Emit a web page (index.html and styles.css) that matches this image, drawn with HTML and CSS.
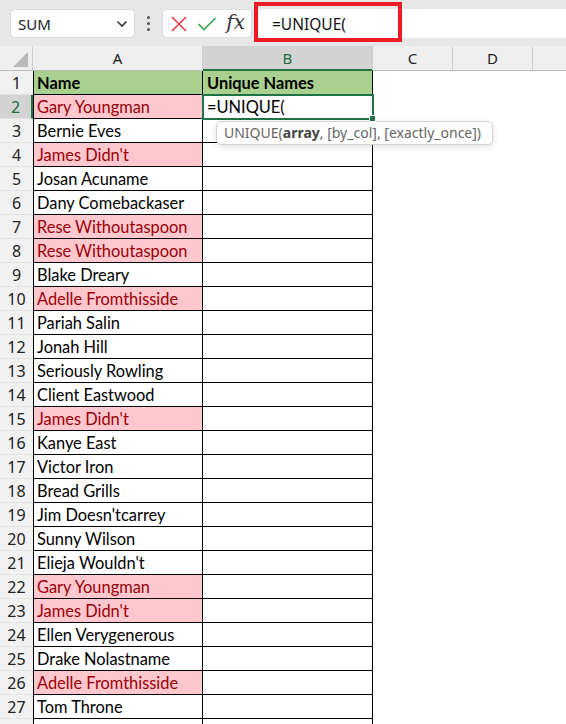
FILE: index.html
```html
<!DOCTYPE html>
<html lang="en">
<head>
  <meta charset="UTF-8" />
  <title>UNIQUE</title>
  <link rel="stylesheet" href="styles.css">
</head>
<body>
  <!-- formula bar -->
  <div class="bar">
    <div class="namebox">
      <span>SUM</span>
      <svg class="chev" width="12" height="8" viewBox="0 0 12 8"><path d="M1.5 1.5 L6 6 L10.5 1.5" fill="none" stroke="#333" stroke-width="1.6"/></svg>
    </div>
    <div class="dots"><i></i><i></i><i></i></div>
    <div class="btns">
      <svg width="18" height="18" viewBox="0 0 18 18"><path d="M2 2 L16 16 M16 2 L2 16" stroke="#e8414a" stroke-width="1.7" fill="none"/></svg>
      <svg width="20" height="16" viewBox="0 0 20 16"><path d="M1.5 8 L7 13.5 L18.5 2" stroke="#3aa757" stroke-width="1.7" fill="none"/></svg>
      <span class="fx">fx</span>
    </div>
    <div class="formula">
      <span class="ftext">=UNIQUE(</span>
      <div class="mark"></div>
    </div>
  </div>

  <!-- sheet -->
  <div class="sheet">
    <div class="ch corner"><span class="tri"></span></div>
    <div class="ch">A</div>
    <div class="ch sel">B</div>
    <div class="ch">C</div>
    <div class="ch">D</div>
    <div class="ch last"></div>

    <div class="rh">1</div><div class="c a head">Name</div><div class="c b head">Unique Names</div><div></div><div></div><div></div>
    <div class="rh sel">2</div><div class="c a dup">Gary Youngman</div><div class="c b active">=UNIQUE(<div class="tip">UNIQUE(<b>array</b>, [by_col], [exactly_once])</div></div><div></div><div></div><div></div>
    <div class="rh">3</div><div class="c a">Bernie Eves</div><div class="c b"></div><div></div><div></div><div></div>
    <div class="rh">4</div><div class="c a dup">James Didn't</div><div class="c b"></div><div></div><div></div><div></div>
    <div class="rh">5</div><div class="c a">Josan Acuname</div><div class="c b"></div><div></div><div></div><div></div>
    <div class="rh">6</div><div class="c a">Dany Comebackaser</div><div class="c b"></div><div></div><div></div><div></div>
    <div class="rh">7</div><div class="c a dup">Rese Withoutaspoon</div><div class="c b"></div><div></div><div></div><div></div>
    <div class="rh">8</div><div class="c a dup">Rese Withoutaspoon</div><div class="c b"></div><div></div><div></div><div></div>
    <div class="rh">9</div><div class="c a">Blake Dreary</div><div class="c b"></div><div></div><div></div><div></div>
    <div class="rh">10</div><div class="c a dup">Adelle Fromthisside</div><div class="c b"></div><div></div><div></div><div></div>
    <div class="rh">11</div><div class="c a">Pariah Salin</div><div class="c b"></div><div></div><div></div><div></div>
    <div class="rh">12</div><div class="c a">Jonah Hill</div><div class="c b"></div><div></div><div></div><div></div>
    <div class="rh">13</div><div class="c a">Seriously Rowling</div><div class="c b"></div><div></div><div></div><div></div>
    <div class="rh">14</div><div class="c a">Client Eastwood</div><div class="c b"></div><div></div><div></div><div></div>
    <div class="rh">15</div><div class="c a dup">James Didn't</div><div class="c b"></div><div></div><div></div><div></div>
    <div class="rh">16</div><div class="c a">Kanye East</div><div class="c b"></div><div></div><div></div><div></div>
    <div class="rh">17</div><div class="c a">Victor Iron</div><div class="c b"></div><div></div><div></div><div></div>
    <div class="rh">18</div><div class="c a">Bread Grills</div><div class="c b"></div><div></div><div></div><div></div>
    <div class="rh">19</div><div class="c a">Jim Doesn'tcarrey</div><div class="c b"></div><div></div><div></div><div></div>
    <div class="rh">20</div><div class="c a">Sunny Wilson</div><div class="c b"></div><div></div><div></div><div></div>
    <div class="rh">21</div><div class="c a">Elieja Wouldn't</div><div class="c b"></div><div></div><div></div><div></div>
    <div class="rh">22</div><div class="c a dup">Gary Youngman</div><div class="c b"></div><div></div><div></div><div></div>
    <div class="rh">23</div><div class="c a dup">James Didn't</div><div class="c b"></div><div></div><div></div><div></div>
    <div class="rh">24</div><div class="c a">Ellen Verygenerous</div><div class="c b"></div><div></div><div></div><div></div>
    <div class="rh">25</div><div class="c a">Drake Nolastname</div><div class="c b"></div><div></div><div></div><div></div>
    <div class="rh">26</div><div class="c a dup">Adelle Fromthisside</div><div class="c b"></div><div></div><div></div><div></div>
    <div class="rh">27</div><div class="c a">Tom Throne</div><div class="c b"></div><div></div><div></div><div></div>
    <div class="rh"></div><div class="c a"></div><div class="c b"></div><div></div><div></div><div></div>
  </div>
</body>
</html>
```

FILE: styles.css
```css
body { margin: 0; background: #fff; font-family: "Lato", "Liberation Sans", sans-serif; overflow: hidden; }

/* formula bar */
.bar { height: 46px; background: #e8e7e8; display: flex; align-items: flex-start; padding-top: 9px; box-sizing: border-box; }
.namebox { margin-left: 10px; width: 125px; height: 29px; box-sizing: border-box; background: #fff; border: 1px solid #d9d9d9; border-radius: 5px; display: flex; align-items: center; justify-content: space-between; padding: 0 6px 0 7px; font-family: "Noto Sans", sans-serif; font-size: 15px; color: #222; }
.dots { width: 27px; height: 29px; display: flex; flex-direction: column; align-items: center; justify-content: center; gap: 3px; }
.dots i { width: 3px; height: 3px; background: #555; border-radius: 50%; }
.btns { width: 90px; height: 29px; box-sizing: border-box; background: #fff; border: 1px solid #dedede; border-radius: 5px; display: flex; align-items: center; justify-content: space-between; padding: 0 6px 0 7px; }
.fx { font-family: "DejaVu Serif", "Liberation Serif", serif; font-style: italic; font-size: 20px; color: #333; margin-top: -3px; }
.formula { position: relative; flex: 1; height: 29px; margin-left: 6px; background: #fff; border-radius: 4px 0 0 4px; display: flex; align-items: center; padding-left: 14px; font-family: "Noto Sans", sans-serif; font-size: 15.5px; color: #111; }
.mark { position: absolute; left: -4px; top: -7px; width: 148px; height: 40px; border: 4px solid #ec1c24; box-sizing: border-box; }

/* sheet */
.sheet { display: grid; grid-template-columns: 33px 170px 170px 80px 80px 1fr; grid-template-rows: 25px; grid-auto-rows: 24px; }
.sheet > div { box-sizing: border-box; }
.ch { background: #efefef; border-right: 1px solid #cfcfcf; border-bottom: 1px solid #bdbdbd; text-align: center; line-height: 24px; font-family: "Noto Sans", sans-serif; font-size: 15px; color: #222; }
.ch.sel { background: #d3d3d3; color: #1d6b3f; border-bottom: 2px solid #217346; }
.ch.last { border-right: none; }
.corner { position: relative; }
.tri { position: absolute; right: 4px; bottom: 3px; width: 0; height: 0; border-left: 15px solid transparent; border-bottom: 15px solid #b9b9b9; }
.rh { background: #f1f1f1; border-bottom: 1px solid #e1e1e1; text-align: center; line-height: 24px; font-family: "Noto Sans", sans-serif; font-size: 16px; color: #222; }
.rh.sel { background: #d3d3d3; color: #1d6b3f; border-right: 2px solid #217346; }
.c { border-right: 1px solid #000; border-bottom: 1px solid #000; padding-left: 4px; font-size: 16.4px; line-height: 24px; color: #000; white-space: nowrap; }
.c.a { border-left: 1px solid #000; padding-left: 3px; }
.c.head { background: #a9d08e; font-weight: bold; }
.c.dup { background: #ffc7ce; color: #9c0006; }
.c.active { position: relative; outline: 2px solid #217346; outline-offset: -1px; z-index: 2; }
.c.active::after { content: ""; position: absolute; right: -4px; bottom: -4px; width: 5px; height: 5px; background: #217346; border: 1px solid #fff; }

/* function tooltip */
.tip { position: absolute; left: 13px; top: 26px; width: 277px; height: 24px; box-sizing: border-box; background: #fff; border: 1px solid #d4d4d4; border-radius: 5px; box-shadow: 0 2px 6px rgba(0,0,0,0.12); padding-left: 7px; line-height: 22px; font-family: "Noto Sans", sans-serif; font-size: 14px; color: #666; }
.tip b { color: #444; }
```
